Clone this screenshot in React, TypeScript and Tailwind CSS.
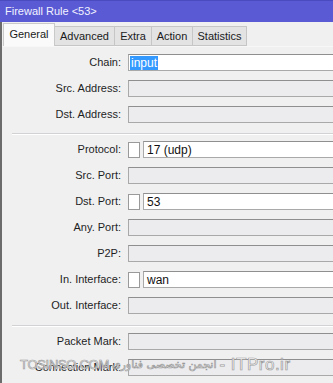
import React from "react";

const FONT = { fontFamily: '"Liberation Sans", Arial, sans-serif' };

function Field({ active, value, selected }: { active?: boolean; value?: string; selected?: boolean }) {
  return (
    <div
      className={`h-[17px] w-[240px] shrink-0 border border-[#a9a9a9] border-t-[#8f8f8f] flex items-center pl-[1px] text-[12px] text-[#111] ${
        active ? "bg-white" : "bg-[#ececee]"
      }`}
    >
      {value &&
        (selected ? (
          <span className="bg-[#3399ff] text-white px-[1px] leading-[14px]">{value}</span>
        ) : (
          <span className="pl-[2px] leading-[14px]">{value}</span>
        ))}
    </div>
  );
}

function Row({
  label,
  active,
  value,
  check,
  selected,
  mt = "mt-[9px]",
}: {
  label: string;
  active?: boolean;
  value?: string;
  check?: boolean;
  selected?: boolean;
  mt?: string;
}) {
  return (
    <div className={`flex items-center h-[17px] ${mt}`}>
      <div className="w-[119px] shrink-0 text-right text-[11px] text-[#1e1e1e] leading-none">{label}</div>
      <div className="ml-[7px] flex items-center">
        {check && (
          <div className="h-[16px] w-[12px] shrink-0 border border-[#9a9a9a] bg-white mr-[3px]" />
        )}
        <Field active={active} value={value} selected={selected} />
      </div>
    </div>
  );
}

function Sep({ mt, mb }: { mt: string; mb: string }) {
  return (
    <div className={`${mt} ${mb} ml-[10px] h-[2px] border-t border-[#d2d2d4] border-b border-b-white`} />
  );
}

export default function App() {
  return (
    <div className="relative w-[333px] h-[383px] overflow-hidden bg-[#f0f0f1]" style={FONT}>
      <div className="h-[22px] bg-[#5a5ad4] border-t border-[#4b4bc0] text-[#f2f2ff] text-[11px] flex items-center pl-[5px]">
        Firewall Rule &lt;53&gt;
      </div>
      <div className="border-l-2 border-[#6c6c6c] h-[361px]">
        <div className="h-[25px] flex items-end pl-[1px] border-b border-[#f7f7f7] text-[11px] text-[#1a1a1a]">
          <div className="h-[23px] w-[52px] bg-[#fafafa] border border-b-0 border-[#c9c9c9] flex items-center justify-center pb-[2px]">
            General
          </div>
          <div className="h-[20px] w-[60px] bg-[#e3e3e4] border border-l-0 border-[#c6c6c6] flex items-center justify-center">
            Advanced
          </div>
          <div className="h-[20px] w-[37px] bg-[#e3e3e4] border border-l-0 border-[#c6c6c6] flex items-center justify-center">
            Extra
          </div>
          <div className="h-[20px] w-[41px] bg-[#e3e3e4] border border-l-0 border-[#c6c6c6] flex items-center justify-center">
            Action
          </div>
          <div className="h-[20px] w-[54px] bg-[#e3e3e4] border border-l-0 border-[#c6c6c6] flex items-center justify-center">
            Statistics
          </div>
        </div>
        <div className="flex flex-col">
          <Row label="Chain:" active value="input" selected mt="mt-[7px]" />
          <Row label="Src. Address:" />
          <Row label="Dst. Address:" />
          <Sep mt="mt-[10px]" mb="mb-[6px]" />
          <Row label="Protocol:" check active value="17 (udp)" mt="mt-0" />
          <Row label="Src. Port:" />
          <Row label="Dst. Port:" check active value="53" />
          <Row label="Any. Port:" />
          <Row label="P2P:" />
          <Row label="In. Interface:" check active value="wan" />
          <Row label="Out. Interface:" />
          <Sep mt="mt-[11px]" mb="mb-[6px]" />
          <Row label="Packet Mark:" mt="mt-0" />
          <Row label="Connection Mark:" />
        </div>
      </div>
      <div
        className="absolute left-[20px] top-[352px] flex items-center gap-[3px] text-white whitespace-nowrap"
        style={{ WebkitTextStroke: "0.7px #9a9a9a" }}
      >
        <span className="text-[13px] tracking-[-0.3px]">TOSINSO.COM</span>
        <span
          className="text-[11px]"
          style={{ fontFamily: '"DejaVu Sans", "Noto Sans", sans-serif' }}
          dir="rtl"
        >
          انجمن تخصصی فناوری
        </span>
        <span className="text-[17px] tracking-[0.5px]">- ITPro.ir</span>
      </div>
    </div>
  );
}
